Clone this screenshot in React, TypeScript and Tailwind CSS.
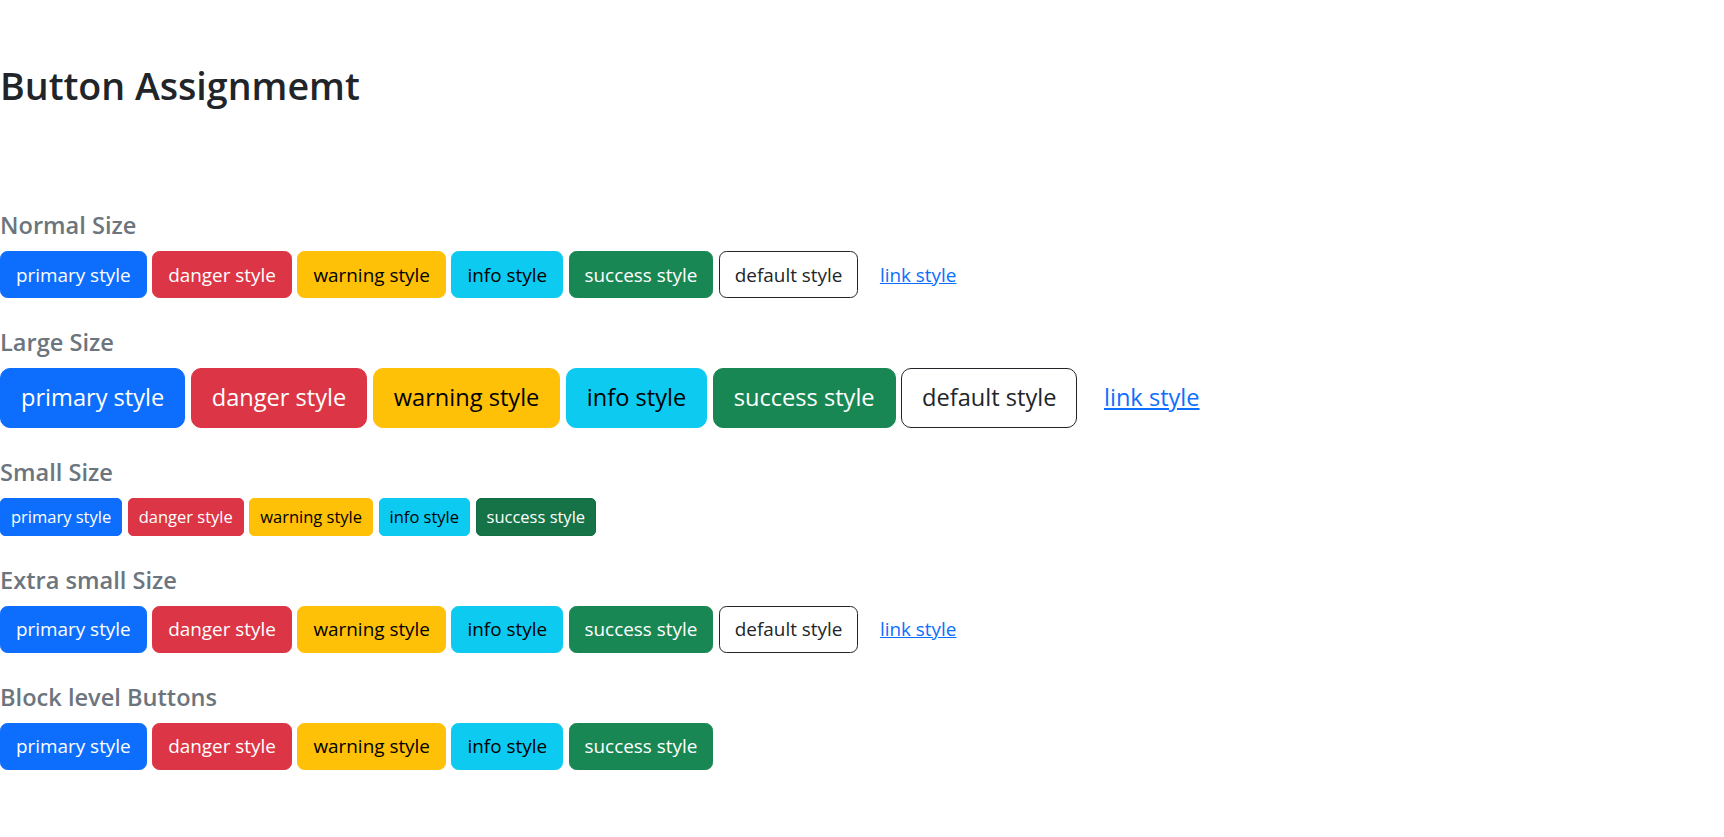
const variants = [
  { label: "primary style", cls: "bg-[#0d6efd] border-[#0d6efd] text-white" },
  { label: "danger style", cls: "bg-[#dc3545] border-[#dc3545] text-white" },
  { label: "warning style", cls: "bg-[#ffc107] border-[#ffc107] text-black" },
  { label: "info style", cls: "bg-[#0dcaf0] border-[#0dcaf0] text-black" },
  { label: "success style", cls: "bg-[#198754] border-[#198754] text-white" },
  { label: "default style", cls: "bg-white border-[#212529] text-[#212529]" },
  { label: "link style", cls: "bg-transparent border-transparent text-[#0d6efd] underline" },
];

// bootstrap sizes at 125%, font shrunk a bit since Open Sans runs wider than Segoe UI
const sizes = {
  normal: "text-[18.9px] leading-[30px] px-[15px] py-[7.5px] rounded-[7.5px]",
  large: "text-[23.6px] leading-[37.5px] px-[20px] py-[10px] rounded-[10px]",
  small: "text-[16.5px] leading-[26.25px] px-[10px] py-[5px] rounded-[5px]",
};

const Row = ({ size, count, darkSuccess }: { size: keyof typeof sizes; count: number; darkSuccess?: boolean }) => (
  <div className="flex gap-[5.5px]">
    {variants.slice(0, count).map((v) => (
      <button
        key={v.label}
        className={`border-[1.25px] ${sizes[size]} ${
          darkSuccess && v.label === "success style" ? "bg-[#157347] border-[#146c43] text-white" : v.cls
        }`}>
        {v.label}
      </button>
    ))}
  </div>
);

const Section = ({ title, children }: { title: string; children: React.ReactNode }) => (
  <div className="mt-[29px]">
    <h5 className="text-[23.6px] leading-[30px] font-semibold text-[#6c757d] mb-[11px]">{title}</h5>
    {children}
  </div>
);

export default function App() {
  return (
    <div className="bg-white min-h-screen pt-[62px] text-[#212529] font-['Open_Sans',sans-serif]">
      <h2 className="text-[37.6px] leading-[48px] font-semibold mb-[100px]">Button Assignmemt</h2>
      <Section title="Normal Size">
        <Row size="normal" count={7} />
      </Section>
      <Section title="Large Size">
        <Row size="large" count={7} />
      </Section>
      <Section title="Small Size">
        <Row size="small" count={5} darkSuccess />
      </Section>
      <Section title="Extra small Size">
        <Row size="normal" count={7} />
      </Section>
      <Section title="Block level Buttons">
        <Row size="normal" count={5} />
      </Section>
    </div>
  );
}
